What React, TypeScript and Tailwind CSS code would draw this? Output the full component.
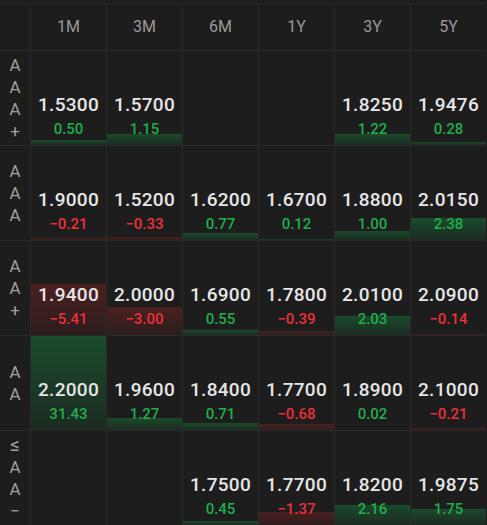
import React from "react";

type Cell = [string, number] | null;

const cols = ["1M", "3M", "6M", "1Y", "3Y", "5Y"];

const rows: { labels: string[]; cells: Cell[] }[] = [
  {
    labels: ["A", "A", "A", "+"],
    cells: [["1.5300", 0.5], ["1.5700", 1.15], null, null, ["1.8250", 1.22], ["1.9476", 0.28]],
  },
  {
    labels: ["A", "A", "A"],
    cells: [["1.9000", -0.21], ["1.5200", -0.33], ["1.6200", 0.77], ["1.6700", 0.12], ["1.8800", 1.0], ["2.0150", 2.38]],
  },
  {
    labels: ["A", "A", "+"],
    cells: [["1.9400", -5.41], ["2.0000", -3.0], ["1.6900", 0.55], ["1.7800", -0.39], ["2.0100", 2.03], ["2.0900", -0.14]],
  },
  {
    labels: ["A", "A"],
    cells: [["2.2000", 31.43], ["1.9600", 1.27], ["1.8400", 0.71], ["1.7700", -0.68], ["1.8900", 0.02], ["2.1000", -0.21]],
  },
  {
    labels: ["≤", "A", "A", "−"],
    cells: [null, null, ["1.7500", 0.45], ["1.7700", -1.37], ["1.8200", 2.16], ["1.9875", 1.75]],
  },
];

function fmt(c: number) {
  const s = Math.abs(c).toFixed(2);
  return c < 0 ? "\u2212" + s : s;
}

function ValueCell({ cell }: { cell: Cell }) {
  if (!cell) return <div className="border-l border-t border-[#2a2a2a] bg-[#1d1d1d]" />;
  const [v, c] = cell;
  const h = Math.min(Math.abs(c) * 10, 100);
  const up = c >= 0;
  return (
    <div className="relative border-l border-t border-[#2a2a2a] bg-[#1d1d1d] flex flex-col items-center pt-[42px]">
      {h > 0.5 && (
        <div
          className={
            up
              ? "absolute left-0 right-0 bottom-0 bg-gradient-to-b from-[rgba(22,163,74,0.34)] to-[rgba(22,163,74,0.1)]"
              : "absolute left-0 right-0 bottom-0 bg-gradient-to-b from-[rgba(220,38,38,0.24)] to-[rgba(220,38,38,0.08)]"
          }
          style={{ height: `${h}%`, minHeight: "1px" }}
        />
      )}
      <div className="relative text-[19px] leading-[24px] font-medium text-[#e6e6e6] tracking-[0.3px]">{v}</div>
      <div
        className={
          "relative mt-[2px] text-[15px] leading-[20px] font-medium " +
          (up ? "text-[#1fae4b]" : "text-[#ee2f3a]")
        }
      >
        {fmt(c)}
      </div>
    </div>
  );
}

export default function App() {
  return (
    <div
      className="w-[487px] h-[525px] bg-[#1d1d1d] pt-[3px] overflow-hidden"
      style={{ fontFamily: "Roboto, 'Noto Sans', sans-serif" }}
    >
      <div className="grid grid-cols-[31px_repeat(6,76px)] grid-rows-[47px_repeat(5,95px)] -ml-px">
        <div className="border-l border-t border-[#2a2a2a]" />
        {cols.map((c) => (
          <div
            key={c}
            className="border-l border-t border-[#2a2a2a] flex items-center justify-center text-[16px] text-[#9a9a9a]"
          >
            {c}
          </div>
        ))}
        {rows.map((r, i) => (
          <React.Fragment key={i}>
            <div className="border-l border-t border-[#2a2a2a] flex flex-col items-center justify-center text-[17px] leading-[22px] text-[#a0a0a0]">
              {r.labels.map((l, j) => (
                <span key={j} className={l === "≤" ? "text-[19px]" : ""}>
                  {l}
                </span>
              ))}
            </div>
            {r.cells.map((c, j) => (
              <ValueCell key={j} cell={c} />
            ))}
          </React.Fragment>
        ))}
      </div>
    </div>
  );
}
